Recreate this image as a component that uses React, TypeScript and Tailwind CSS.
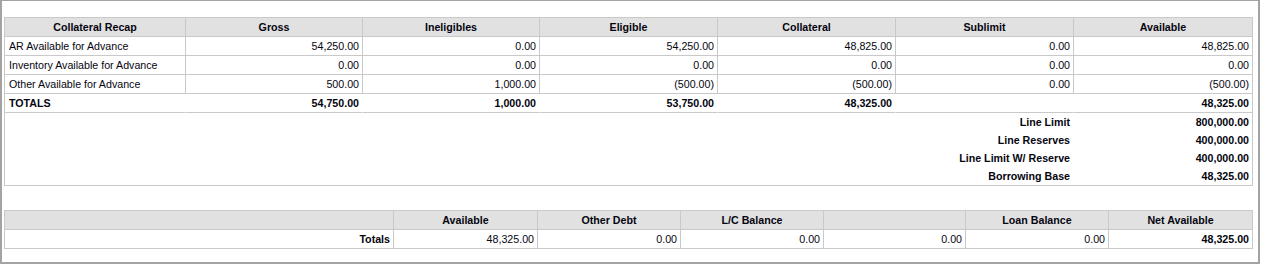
import React from "react";

const C1 = "grid grid-cols-[181px_177px_177px_178px_178px_178px_179px]";
const C2 = "grid grid-cols-[389px_144px_143px_143px_142px_143px_144px]";

const headers1 = ["Collateral Recap", "Gross", "Ineligibles", "Eligible", "Collateral", "Sublimit", "Available"];
const rows1 = [
  ["AR Available for Advance", "54,250.00", "0.00", "54,250.00", "48,825.00", "0.00", "48,825.00"],
  ["Inventory Available for Advance", "0.00", "0.00", "0.00", "0.00", "0.00", "0.00"],
  ["Other Available for Advance", "500.00", "1,000.00", "(500.00)", "(500.00)", "0.00", "(500.00)"],
];
const totals1 = ["TOTALS", "54,750.00", "1,000.00", "53,750.00", "48,325.00", "", "48,325.00"];
const summary = [
  ["Line Limit", "800,000.00"],
  ["Line Reserves", "400,000.00"],
  ["Line Limit W/ Reserve", "400,000.00"],
  ["Borrowing Base", "48,325.00"],
];
const headers2 = ["", "Available", "Other Debt", "L/C Balance", "", "Loan Balance", "Net Available"];
const row2 = ["Totals", "48,325.00", "0.00", "0.00", "0.00", "0.00", "48,325.00"];

const cell = "h-[19px] flex items-center border-r border-b border-[#c9c9c9] whitespace-nowrap";

export default function App() {
  return (
    <div
      className="w-[1260px] h-[264px] bg-white border-t border-l-2 border-r-2 border-b-2 border-[#a3a3a3] pl-[2px] pt-[16px] text-[10.67px] text-[#05050f]"
      style={{ fontFamily: '"Liberation Sans", Arial, sans-serif' }}
    >
      {/* Table 1 */}
      <div className="w-[1249px] border-l border-t border-[#c9c9c9]">
        <div className={C1}>
          {headers1.map((h, i) => (
            <div key={i} className={`${cell} justify-center bg-[#e1e1e1] font-bold`}>
              {h}
            </div>
          ))}
        </div>
        {rows1.map((r, ri) => (
          <div key={ri} className={C1}>
            {r.map((v, i) => (
              <div key={i} className={`${cell} ${i === 0 ? "justify-start pl-[4px]" : "justify-end pr-[3px]"}`}>
                {v}
              </div>
            ))}
          </div>
        ))}
        <div className={C1}>
          {totals1.map((v, i) => (
            <div
              key={i}
              className={`h-[19px] flex items-center border-b border-r border-b-[#c9c9c9] ${
                i === 6 ? "border-r-[#c9c9c9]" : "border-r-transparent"
              } font-bold whitespace-nowrap ${i === 0 ? "justify-start pl-[4px]" : "justify-end pr-[3px]"}`}
            >
              {v}
            </div>
          ))}
        </div>
        <div className="border-r border-b border-[#c9c9c9]">
          {summary.map(([l, v], i) => (
            <div key={i} className="grid grid-cols-[1069px_179px] h-[18px] items-center font-bold">
              <div className="text-right pr-[4px]">{l}</div>
              <div className="text-right pr-[4px]">{v}</div>
            </div>
          ))}
        </div>
      </div>

      {/* Table 2 */}
      <div className="w-[1249px] mt-[24px] border-l border-t border-[#c9c9c9]">
        <div className={C2}>
          {headers2.map((h, i) => (
            <div key={i} className={`${cell} justify-center bg-[#e1e1e1] font-bold`}>
              {h}
            </div>
          ))}
        </div>
        <div className={C2}>
          {row2.map((v, i) => (
            <div
              key={i}
              className={`${cell} justify-end pr-[3px] ${i === 0 || i === 6 ? "font-bold" : ""}`}
            >
              {v}
            </div>
          ))}
        </div>
      </div>
    </div>
  );
}
